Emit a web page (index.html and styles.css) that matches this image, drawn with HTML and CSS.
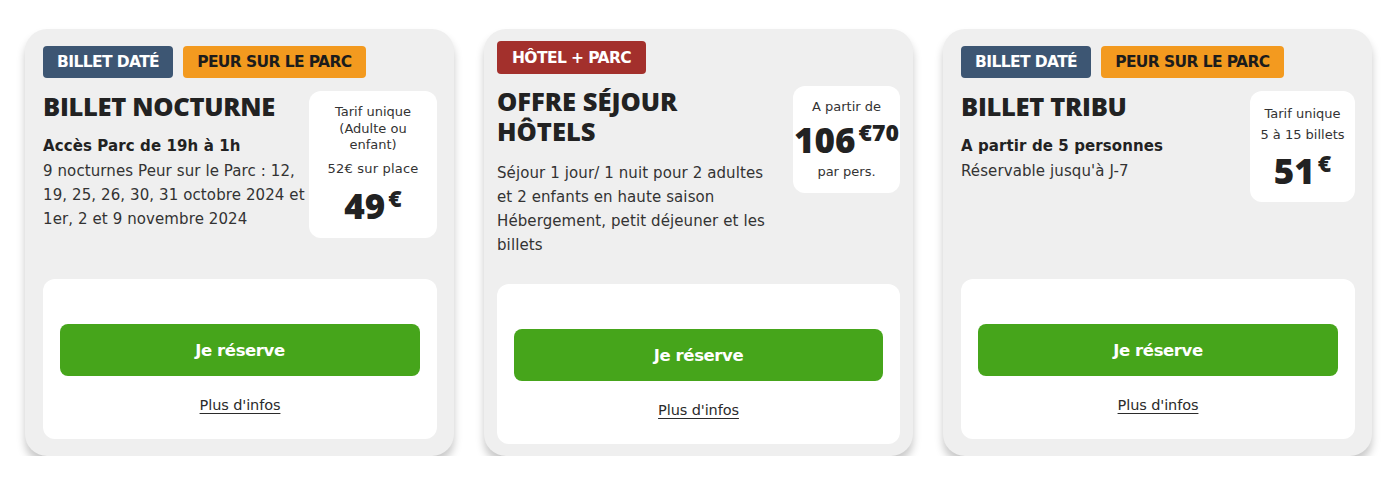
FILE: index.html
```html
<!DOCTYPE html>
<html lang="fr">
<head>
<meta charset="utf-8">
<title>Offres</title>
<link rel="stylesheet" href="styles.css">
</head>
<body>
<main class="offers">
  <article class="card">
    <div class="card-top">
      <div class="badges">
        <span class="badge badge-blue">BILLET DATÉ</span>
        <span class="badge badge-orange">PEUR SUR LE PARC</span>
      </div>
      <div class="card-main">
        <div class="info">
          <h2 class="title">BILLET NOCTURNE</h2>
          <p class="subtitle">Accès Parc de 19h à 1h</p>
          <p class="desc">9 nocturnes Peur sur le Parc : 12, 19, 25, 26, 30, 31 octobre 2024 et 1er, 2 et 9 novembre 2024</p>
        </div>
        <div class="price price-nocturne">
          <p class="price-label">Tarif unique (Adulte ou enfant)</p>
          <p class="price-note">52€ sur place</p>
          <p class="price-amount">49<sup>€</sup></p>
        </div>
      </div>
    </div>
    <div class="card-actions">
      <a class="btn" href="#">Je réserve</a>
      <a class="more" href="#">Plus d'infos</a>
    </div>
  </article>

  <article class="card card-wide">
    <div class="card-top">
      <div class="badges">
        <span class="badge badge-red">HÔTEL + PARC</span>
      </div>
      <div class="card-main">
        <div class="info">
          <h2 class="title"><span class="title-line">OFFRE SÉJOUR</span><span class="title-line">HÔTELS</span></h2>
          <p class="desc desc-spaced">Séjour 1 jour/ 1 nuit pour 2 adultes et 2 enfants en haute saison<br>Hébergement, petit déjeuner et les billets</p>
        </div>
        <div class="price price-sejour">
          <p class="price-label">A partir de</p>
          <p class="price-amount">106<sup>€70</sup></p>
          <p class="price-label price-after">par pers.</p>
        </div>
      </div>
    </div>
    <div class="card-actions">
      <a class="btn" href="#">Je réserve</a>
      <a class="more" href="#">Plus d'infos</a>
    </div>
  </article>

  <article class="card">
    <div class="card-top">
      <div class="badges">
        <span class="badge badge-blue">BILLET DATÉ</span>
        <span class="badge badge-orange">PEUR SUR LE PARC</span>
      </div>
      <div class="card-main">
        <div class="info">
          <h2 class="title">BILLET TRIBU</h2>
          <p class="subtitle">A partir de 5 personnes</p>
          <p class="desc">Réservable jusqu'à J-7</p>
        </div>
        <div class="price price-tribu">
          <p class="price-label price-label-loose">Tarif unique<br>5 à 15 billets</p>
          <p class="price-amount price-amount-tribu">51<sup>€</sup></p>
        </div>
      </div>
    </div>
    <div class="card-actions">
      <a class="btn" href="#">Je réserve</a>
      <a class="more" href="#">Plus d'infos</a>
    </div>
  </article>
</main>
</body>
</html>
```

FILE: styles.css
```css
* { box-sizing: border-box; }

html, body {
  margin: 0;
  padding: 0;
  background: #ffffff;
}

body {
  font-family: "DejaVu Sans", "Open Sans", sans-serif;
  color: #2b2b2b;
}

p, h2 { margin: 0; }

.offers {
  display: grid;
  grid-template-columns: repeat(3, 429px);
  column-gap: 30px;
  padding: 29px 15px 0 25px;
}

.card {
  display: flex;
  flex-direction: column;
  min-height: 427px;
  background: #efefef;
  border-radius: 22px;
  padding: 17px 17px 17px 18px;
  box-shadow: 0 7px 9px rgba(0, 0, 0, 0.22);
}

.card-wide {
  padding: 12px 13px 12px 13px;
}

.card-top {
  flex: 1;
}

.badges {
  display: flex;
  gap: 10px;
}

.badge {
  display: inline-flex;
  align-items: center;
  height: 32px;
  padding: 0 14px;
  border-radius: 4px;
  font-size: 15.5px;
  font-weight: 700;
  letter-spacing: -0.6px;
}

.badge-blue { background: #3d5673; color: #ffffff; }
.badge-orange { background: #f39a1f; color: #1c1c1c; }
.badge-red { background: #a3302c; color: #ffffff; height: 33px; padding: 0 15px; }

.card-main {
  display: flex;
  justify-content: space-between;
  align-items: flex-start;
  gap: 2px;
  margin-top: 13px;
}

.card-wide .card-main {
  margin-top: 12px;
  gap: 16px;
}

.info {
  flex: 1;
  min-width: 0;
}

.title {
  font-family: "Open Sans", sans-serif;
  font-size: 25.5px;
  line-height: 31px;
  font-weight: 800;
  color: #222222;
  letter-spacing: -0.3px;
}

.title-line {
  display: block;
  height: 30px;
  line-height: 30px;
  letter-spacing: 0;
}

.subtitle {
  margin-top: 12px;
  font-size: 15px;
  line-height: 25px;
  font-weight: 700;
  color: #222222;
  letter-spacing: 0.1px;
}

.desc {
  font-size: 15px;
  line-height: 24px;
  color: #333333;
  letter-spacing: 0.1px;
}

.desc-spaced { margin-top: 15px; }

.price {
  flex: none;
  background: #ffffff;
  border-radius: 12px;
  text-align: center;
  color: #333333;
}

.price-nocturne {
  width: 128px;
  padding: 13px 14px 12px;
}

.price-sejour {
  width: 107px;
  padding: 13px 0 13px;
}

.price-tribu {
  width: 105px;
  padding: 12px 0 11px;
}

.price-label {
  font-size: 13px;
  line-height: 16.5px;
}

.price-label-loose { line-height: 21px; }

.price-note {
  margin-top: 7px;
  font-size: 13px;
  line-height: 16px;
  letter-spacing: 0.2px;
}

.price-after { margin-top: 4px; }

.price-amount {
  margin-top: 9px;
  font-family: "Open Sans", sans-serif;
  font-size: 35px;
  line-height: 40px;
  font-weight: 800;
  color: #222222;
  white-space: nowrap;
  letter-spacing: 0;
}

.price-sejour .price-amount {
  margin-top: 4px;
  margin-left: -20px;
  margin-right: -20px;
}

.price-amount-tribu { margin-top: 6px; }

.price-amount sup {
  font-size: 23px;
  vertical-align: 12px;
  line-height: 0;
  margin-left: 3px;
}

.card-actions {
  display: flex;
  flex-direction: column;
  align-items: center;
  height: 160px;
  margin-top: 24px;
  padding: 45px 17px 0;
  background: #ffffff;
  border-radius: 12px;
}

.btn {
  display: flex;
  align-items: center;
  justify-content: center;
  align-self: stretch;
  height: 52px;
  background: #46a51b;
  border-radius: 8px;
  color: #ffffff;
  font-size: 16.5px;
  font-weight: 700;
  text-decoration: none;
  letter-spacing: -0.4px;
}

.more {
  margin-top: 18px;
  font-size: 14.5px;
  line-height: 22px;
  color: #2b2b2b;
  text-decoration: underline;
  text-underline-offset: 3px;
  letter-spacing: -0.1px;
}
```
